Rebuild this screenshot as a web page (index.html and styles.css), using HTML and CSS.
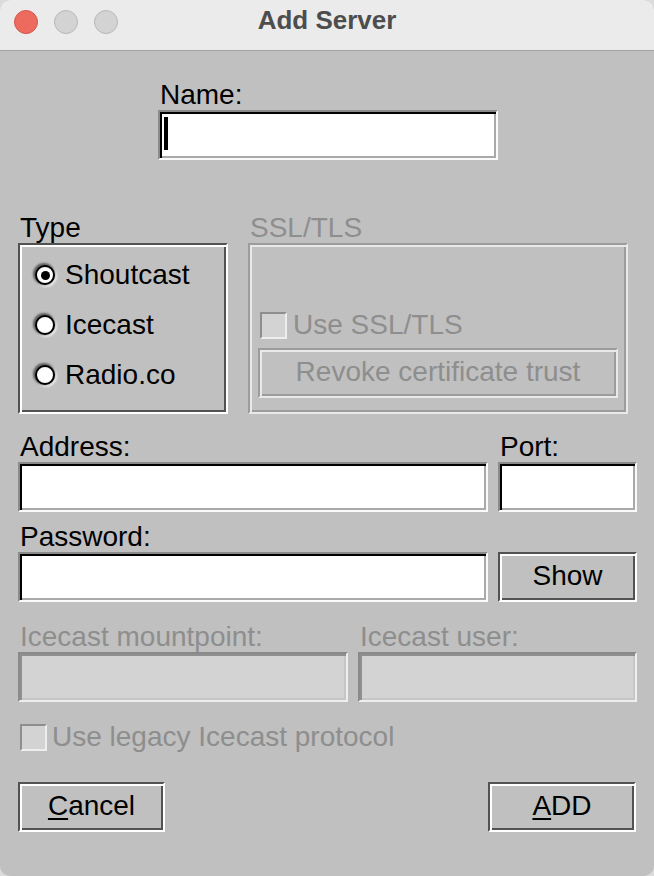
FILE: index.html
```html
<!DOCTYPE html>
<html lang="en">
<head>
<meta charset="utf-8">
<title>Add Server</title>
<link rel="stylesheet" href="styles.css">
</head>
<body>
<div class="window">
  <header class="titlebar">
    <div class="lights">
      <span class="light close"></span>
      <span class="light"></span>
      <span class="light"></span>
    </div>
    <div class="title">Add Server</div>
    <div></div>
  </header>

  <main class="content">
    <section class="name-field">
      <div class="label">Name:</div>
      <div class="entry"><span class="caret"></span></div>
    </section>

    <div class="groups">
      <section class="group type-group">
        <div class="label">Type</div>
        <div class="groove box radios">
          <div class="radio-row"><span class="radio checked"></span><span>Shoutcast</span></div>
          <div class="radio-row"><span class="radio"></span><span>Icecast</span></div>
          <div class="radio-row"><span class="radio"></span><span>Radio.co</span></div>
        </div>
      </section>
      <section class="group ssl-group">
        <div class="label disabled">SSL/TLS</div>
        <div class="groove groove-disabled box ssl-box">
          <div class="check-row ssl-check"><span class="checkbox"></span><span class="disabled">Use SSL/TLS</span></div>
          <div class="groove groove-disabled button revoke disabled">Revoke certificate trust</div>
        </div>
      </section>
    </div>

    <div class="field-row addr-row">
      <div class="field">
        <div class="label">Address:</div>
        <div class="entry"></div>
      </div>
      <div class="field">
        <div class="label">Port:</div>
        <div class="entry"></div>
      </div>
    </div>

    <div class="field-row pass-row">
      <div class="field">
        <div class="label">Password:</div>
        <div class="entry"></div>
      </div>
      <div class="field field-end">
        <div class="groove button">Show</div>
      </div>
    </div>

    <div class="field-row ice-row">
      <div class="field">
        <div class="label disabled">Icecast mountpoint:</div>
        <div class="entry entry-disabled"></div>
      </div>
      <div class="field">
        <div class="label disabled">Icecast user:</div>
        <div class="entry entry-disabled"></div>
      </div>
    </div>

    <div class="check-row legacy"><span class="checkbox"></span><span class="disabled">Use legacy Icecast protocol</span></div>

    <div class="actions">
      <div class="groove button action cancel"><span class="mn">C</span>ancel</div>
      <div class="groove button action add"><span class="mn">A</span>DD</div>
    </div>
  </main>
</div>
</body>
</html>
```

FILE: styles.css
```css
* { box-sizing: border-box; }

html, body {
  margin: 0;
  padding: 0;
  background: #dcdcdc;
}

body {
  font-family: "Liberation Sans", Arial, sans-serif;
  font-size: 28px;
  color: #000;
}

.window {
  width: 654px;
  height: 876px;
  border-radius: 10px;
  overflow: hidden;
  background: #c0c0c0;
}

/* title bar */
.titlebar {
  height: 51px;
  background: #ebebeb;
  border-bottom: 1px solid #a3a3a3;
  display: grid;
  grid-template-columns: 1fr auto 1fr;
  align-items: start;
}

.lights {
  display: flex;
  gap: 16px;
  padding: 10px 0 0 14px;
}

.light {
  width: 24px;
  height: 24px;
  border-radius: 50%;
  background: #d3d3d3;
  border: 1px solid #b8b8b8;
}

.light.close {
  background: #ed6a5e;
  border-color: #d4564b;
}

.title {
  font-weight: bold;
  font-size: 26px;
  line-height: 30px;
  margin-top: 5px;
  color: #4d4d4d;
}

/* content */
.content {
  padding: 27px 17px 0 18px;
  display: flex;
  flex-direction: column;
}

.label {
  line-height: 34px;
  height: 32px;
  padding-left: 2px;
  white-space: nowrap;
}

.disabled { color: #8e8e8e; }

.entry {
  height: 50px;
  background: #fff;
  border: 2px solid;
  border-color: #8a8a8a #fafafa #fafafa #8a8a8a;
  box-shadow: inset 2px 2px 0 #000, inset -2px -2px 0 #a9a9a9;
  padding: 5px 0 0 4px;
}

.entry-disabled {
  background: #d3d3d3;
  border-color: #8a8a8a #eeeeee #eeeeee #8a8a8a;
  box-shadow: inset 2px 2px 0 #8f8f8f, inset -2px -2px 0 #c6c6c6;
}

.caret {
  display: block;
  width: 4px;
  height: 33px;
  background: #000;
}

.name-field {
  margin-left: 140px;
  width: 340px;
}

/* group boxes */
.groups {
  margin-top: 51px;
  display: flex;
  gap: 20px;
}

.type-group { width: 210px; }
.ssl-group { width: 380px; }

.groove {
  border: 2px solid;
  border-color: #525252 #ffffff #ffffff #525252;
  box-shadow: inset 2px 2px 0 #ffffff, inset -2px -2px 0 #525252;
}

.groove-disabled {
  border-color: #9c9c9c #e9e9e9 #e9e9e9 #9c9c9c;
  box-shadow: inset 2px 2px 0 #e9e9e9, inset -2px -2px 0 #9c9c9c;
}

.box { height: 171px; }

.radios {
  padding: 5px 0 0 15px;
  display: flex;
  flex-direction: column;
}

.radio-row {
  height: 50px;
  line-height: 52px;
  display: flex;
  align-items: center;
  gap: 10px;
}

.radio {
  width: 20px;
  height: 20px;
  flex: none;
  border-radius: 50%;
  background: #fff;
  border: 2px solid #000;
  box-shadow: -1px -1px 2px 1px #5e5e5e, 1px 1px 2px 1px #ececec;
  display: grid;
  place-items: center;
}

.radio.checked::after {
  content: "";
  width: 9px;
  height: 9px;
  border-radius: 50%;
  background: #000;
}

.ssl-box {
  display: flex;
  flex-direction: column;
  justify-content: flex-end;
  padding: 0 8px 14px 8px;
}

.check-row {
  display: flex;
  align-items: center;
  gap: 6px;
  height: 32px;
  line-height: 34px;
  white-space: nowrap;
}

.ssl-check { padding-left: 2px; }

.checkbox {
  width: 27px;
  height: 27px;
  flex: none;
  background: #d3d3d3;
  border: 2px solid;
  border-color: #8e8e8e #ededed #ededed #8e8e8e;
}

.button {
  height: 50px;
  line-height: 44px;
  text-align: center;
  white-space: nowrap;
}

.revoke {
  margin-top: 7px;
  width: 360px;
  align-self: flex-start;
}

/* entry rows */
.field-row {
  display: grid;
  column-gap: 10px;
}

.addr-row {
  margin-top: 16px;
  grid-template-columns: 470px 139px;
}

.pass-row {
  margin-top: 8px;
  grid-template-columns: 470px 139px;
}

.field-end {
  display: flex;
  flex-direction: column;
  justify-content: flex-end;
}

.ice-row {
  margin-top: 18px;
  grid-template-columns: 330px 279px;
}

.legacy {
  margin-top: 19px;
  padding-left: 2px;
  gap: 5px;
}

.actions {
  margin-top: 29px;
  margin-right: 1px;
  display: flex;
  justify-content: space-between;
}

.action.cancel { width: 147px; }
.action.add { width: 148px; }

.mn {
  text-decoration: underline;
  text-decoration-thickness: 2px;
  text-underline-offset: 3px;
}
```
